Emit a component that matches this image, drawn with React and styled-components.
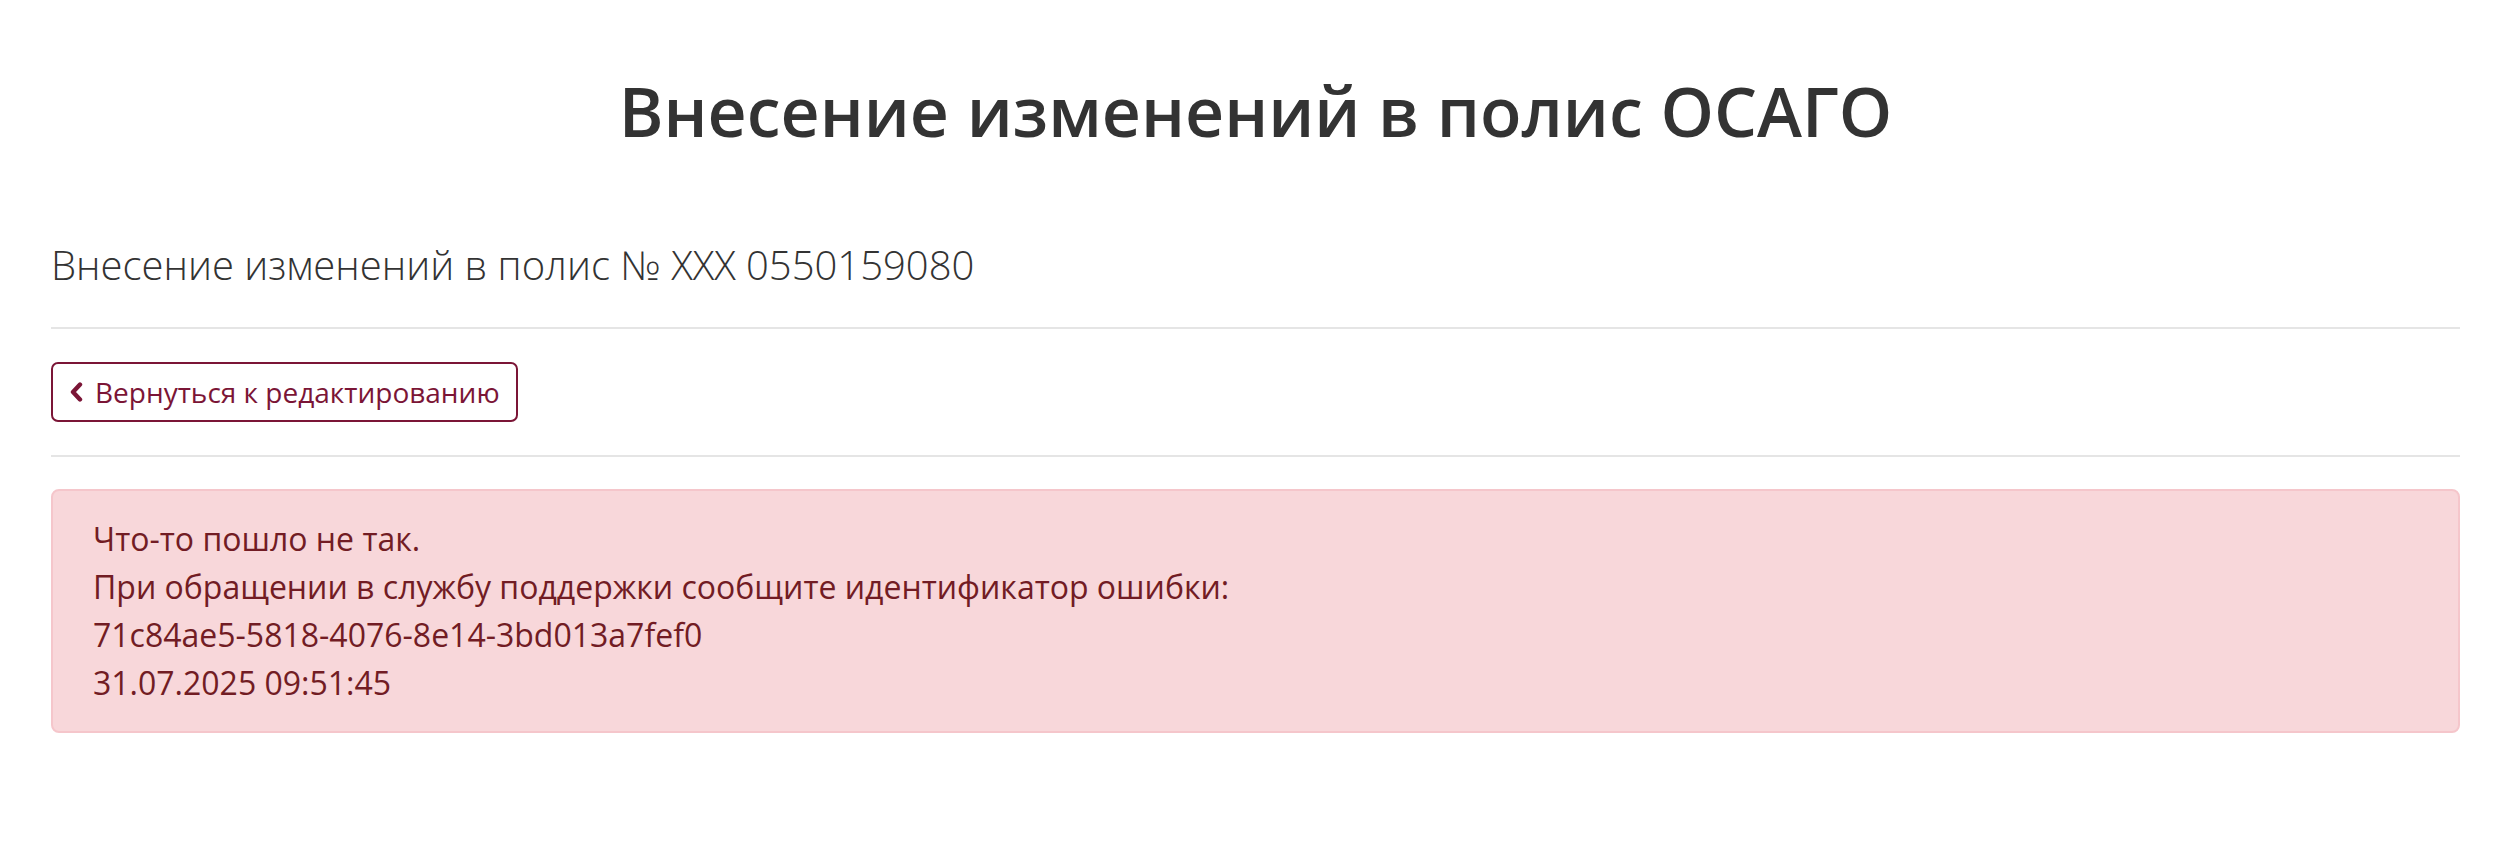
import React from "react";
import styled, { createGlobalStyle } from "styled-components";

const Global = createGlobalStyle`
  html, body { margin: 0; padding: 0; background: #fff; }
  body { font-family: "Open Sans", "Noto Sans", sans-serif; color: #333; }
  * { box-sizing: border-box; }
`;

const Page = styled.main`
  width: 2409px;
  margin-left: 51px;
  padding-top: 70px;
`;

const Title = styled.h1`
  margin: 0;
  font-size: 68px;
  line-height: 1.2;
  font-weight: 600;
  color: #333;
  text-align: center;
`;

const Subtitle = styled.h2`
  margin: 83px 0 0;
  font-size: 40px;
  line-height: 60px;
  font-weight: 300;
  color: #333;
`;

const Rule = styled.hr`
  margin: 32px 0;
  border: 0;
  border-top: 2px solid #e5e5e5;
`;

const Toolbar = styled.div`
  display: flex;
  padding: 1px 0;
`;

const BackButton = styled.button`
  display: inline-flex;
  align-items: center;
  gap: 12px;
  height: 60px;
  padding: 0 16px 0 17px;
  border: 2px solid #7b1536;
  border-radius: 7px;
  background: #fff;
  color: #7b1536;
  font-family: "Open Sans", sans-serif;
  font-size: 28px;
  line-height: 42px;
  cursor: pointer;
`;

const Alert = styled.div`
  padding: 24px 40px;
  border: 2px solid #f5c6cb;
  border-radius: 8px;
  background: #f8d7da;
  color: #721c24;
  font-size: 32px;
  line-height: 48px;
`;

const Line = styled.div``;

const Chevron = () => (
  <svg width="13" height="20" viewBox="0 0 13 20" aria-hidden="true">
    <path d="M10 2.6 L3 10 L10 17.4" fill="none" stroke="currentColor" strokeWidth="4.4" strokeLinecap="round" strokeLinejoin="round" />
  </svg>
);

export default function App() {
  return (
    <>
      <Global />
      <Page>
        <Title>Внесение изменений в полис ОСАГО</Title>
        <Subtitle>Внесение изменений в полис № XXX 0550159080</Subtitle>
        <Rule />
        <Toolbar>
          <BackButton type="button">
            <Chevron />
            Вернуться к редактированию
          </BackButton>
        </Toolbar>
        <Rule />
        <Alert>
          <Line>Что-то пошло не так.</Line>
          <Line>При обращении в службу поддержки сообщите идентификатор ошибки:</Line>
          <Line>71c84ae5-5818-4076-8e14-3bd013a7fef0</Line>
          <Line>31.07.2025 09:51:45</Line>
        </Alert>
      </Page>
    </>
  );
}
